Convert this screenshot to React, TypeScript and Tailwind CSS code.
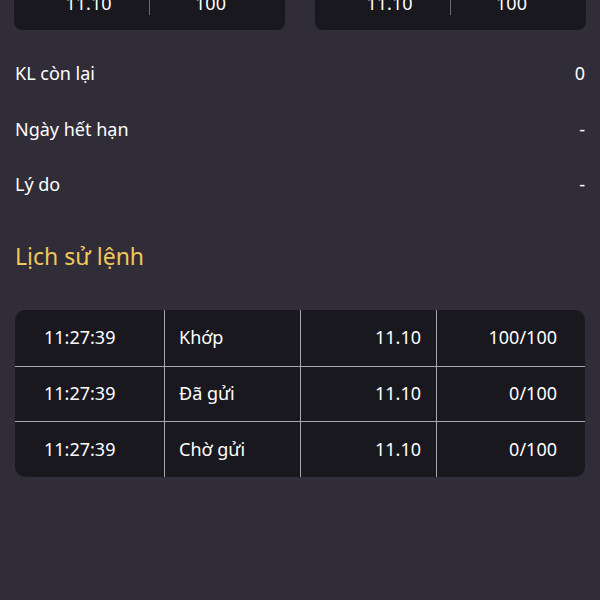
import React from "react"

const font = { fontFamily: '"Noto Sans", "Open Sans", sans-serif' }

interface HistoryRow {
  time: string
  status: string
  price: string
  qty: string
}

const rows: HistoryRow[] = [
  { time: "11:27:39", status: "Khớp", price: "11.10", qty: "100/100" },
  { time: "11:27:39", status: "Đã gửi", price: "11.10", qty: "0/100" },
  { time: "11:27:39", status: "Chờ gửi", price: "11.10", qty: "0/100" },
]

const info = [
  { label: "KL còn lại", value: "0" },
  { label: "Ngày hết hạn", value: "-" },
  { label: "Lý do", value: "-" },
]

function PriceCard() {
  return (
    <div className="flex-1 h-[58px] mt-[-28px] rounded-[8px] bg-[#19181e] flex items-start px-[14px]">
      <div className="flex-1 text-center text-[18px] leading-[22px] mt-[20px] text-white">11.10</div>
      <div className="w-px h-[43px] bg-[#6b6a70]" />
      <div className="flex-1 text-center text-[18px] leading-[22px] mt-[20px] text-white">100</div>
    </div>
  )
}

export default function App() {
  return (
    <div className="w-[600px] h-[600px] overflow-hidden bg-[#302d38] text-white" style={font}>
      <div className="flex gap-[30px] px-[14px]">
        <PriceCard />
        <PriceCard />
      </div>

      <div className="px-[15px] pt-[16px]">
        {info.map((it) => (
          <div key={it.label} className="flex justify-between items-center h-[55.5px] text-[18px]">
            <span>{it.label}</span>
            <span>{it.value}</span>
          </div>
        ))}
      </div>

      <div className="px-[15px] pt-[26px] text-[23px] text-[#f2c75a]">Lịch sử lệnh</div>

      <div className="mx-[15px] mt-[37px] rounded-[10px] bg-[#19181e] overflow-hidden">
        {rows.map((r, i) => (
          <div
            key={i}
            className={`grid grid-cols-[150px_136px_136px_1fr] h-[55.5px] text-[18px] ${i > 0 ? "border-t border-[#a8a8ac]" : ""}`}
          >
            <div className="flex items-center pl-[29px] border-r border-[#a8a8ac]">{r.time}</div>
            <div className="flex items-center px-[14px] border-r border-[#a8a8ac]">{r.status}</div>
            <div className="flex items-center justify-end pr-[15px] border-r border-[#a8a8ac]">{r.price}</div>
            <div className="flex items-center justify-end pr-[28px]">{r.qty}</div>
          </div>
        ))}
      </div>
    </div>
  )
}
